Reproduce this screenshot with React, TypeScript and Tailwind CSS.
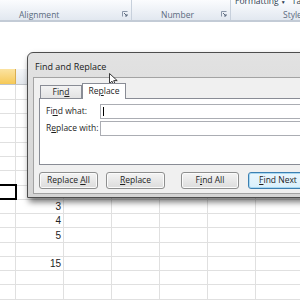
import React from "react"

const rowHeights = [
  "h-[15px]", "h-[14px]", "h-[14px]", "h-[15px]", "h-[14px]", "h-[14px]", "h-[15px]", "h-[14px]",
  "h-[14px]", "h-[14px]", "h-[15px]", "h-[14px]", "h-[14px]", "h-[14px]", "h-[15px]",
]
const values: Record<number, string> = { 8: "3", 9: "4", 10: "5", 12: "15" }
const cols = [0, 1, 2, 3, 4, 5, 6]

function Launcher() {
  return (
    <svg width="6" height="6" viewBox="0 0 6 6" className="mb-[2px]">
      <path d="M0.5 5.5V0.5H5.5" fill="none" stroke="#8a96a8" strokeWidth="1" />
      <path d="M2 2L5 5M5 3V5H3" fill="none" stroke="#5d6b7f" strokeWidth="1" />
    </svg>
  )
}

function Btn({ label, under, w, focus }: { label: string; under: number; w: string; focus?: boolean }) {
  return (
    <div
      className={`${w} h-[17px] shrink-0 rounded-[3px] border flex items-center justify-center text-[8.5px] text-[#1e1e1e] ${
        focus
          ? "border-[#3c7fb1] bg-gradient-to-b from-[#eaf6fd] to-[#d9f0fc] shadow-[inset_0_0_0_1px_#a8d8f2]"
          : "border-[#8e8f8f] bg-gradient-to-b from-[#f4f4f4] to-[#dcdcdc] shadow-[inset_0_0_0_1px_#fbfbfb]"
      }`}
    >
      <span className="whitespace-pre">
        {label.slice(0, under)}
        <span className="underline">{label[under]}</span>
        {label.slice(under + 1)}
      </span>
    </div>
  )
}

export default function App() {
  return (
    <div className="relative w-[300px] h-[300px] overflow-hidden bg-white font-['Open_Sans',sans-serif]">
      {/* ribbon */}
      <div className="h-[22px] flex bg-gradient-to-b from-[#fbfcfe] to-[#e2e8f0] border-b-2 border-[#c3cbd6] text-[8.5px] leading-none text-[#5b6b80]">
        <div className="w-[132px] shrink-0 flex items-end justify-between pl-[19px] pr-[3px] pb-[1px] border-r border-[#c7d0dc]">
          <span>Alignment</span>
          <Launcher />
        </div>
        <div className="w-[99px] shrink-0 flex items-end justify-between pl-[29px] pr-[3px] pb-[1px] border-r border-[#c7d0dc]">
          <span>Number</span>
          <Launcher />
        </div>
        <div className="flex-1 relative">
          <div className="absolute left-[4px] -top-[3px] text-[#2c3b4f] whitespace-nowrap">
            Formatting <span className="text-[5px]">▼</span>
            <span className="ml-[6px]">Tab</span>
          </div>
          <div className="absolute left-[52px] bottom-[1px]">Styles</div>
        </div>
      </div>

      <div className="h-[47px]" />

      {/* sheet */}
      <div className="relative font-['Liberation_Sans',sans-serif]">
        <div className="h-[16px] flex border-b border-[#c0c4c9]">
          <div className="w-[16px] shrink-0 bg-gradient-to-b from-[#fbe3a0] to-[#f6c955] border-r border-[#d9ae52]" />
          {cols.slice(1).map((c) => (
            <div key={c} className="w-[48px] shrink-0 bg-gradient-to-b from-[#f4f6f9] to-[#e3e7ec] border-r border-[#c8ccd2]" />
          ))}
        </div>
        {rowHeights.map((h, r) => (
          <div key={r} className={`${h} flex border-b border-[#e0e0e0]`}>
            <div className="w-[16px] shrink-0 border-r border-[#e0e0e0]" />
            {cols.slice(1).map((c) => (
              <div
                key={c}
                className="w-[48px] shrink-0 border-r border-[#e0e0e0] flex items-center justify-end pr-[2px] text-[10px] text-[#222]"
              >
                {c === 1 ? values[r] : null}
              </div>
            ))}
          </div>
        ))}
        <div className="absolute left-[-2px] top-[115px] w-[19px] h-[16px] border-2 border-black" />
      </div>

      {/* dialog */}
      <div className="absolute left-[27px] top-[52px] w-[290px] h-[146px] rounded-tl-[6px] border border-[#4d4d4d] bg-gradient-to-b from-[#e2e2e2] to-[#d4d4d4] shadow-[2px_4px_6px_rgba(0,0,0,0.55)] text-[#1e1e1e]">
        <div className="h-[24px] flex items-center pl-[7px] pt-[4px] text-[9px] text-[#1a1a1a]">Find and Replace</div>
        <div className="ml-[5px] h-[117px] border border-[#a3a3a3] bg-[#f0f0f0] pl-[5px] pt-[4px]">
          <div className="h-[16px] flex items-end text-[8.5px]">
            <div className="ml-[1px] w-[42px] h-[13px] border border-b-0 border-[#898c95] bg-gradient-to-b from-[#f3f3f3] to-[#e3e3e3] flex items-center justify-center">
              <span>
                Fin<span className="underline">d</span>
              </span>
            </div>
            <div className="w-[44px] h-[16px] border border-b-0 border-[#898c95] bg-white -mb-px relative z-10 flex items-center justify-center">
              <span>
                Re<span className="underline">p</span>lace
              </span>
            </div>
          </div>
          <div className="h-[67px] border border-[#898c95] bg-white pt-[5px] text-[8.5px]">
            <div className="flex items-center">
              <div className="w-[60px] shrink-0 pl-[6px] whitespace-nowrap">
                Fi<span className="underline">n</span>d what:
              </div>
              <div className="flex-1 h-[15px] border border-[#abadb3] relative">
                <div className="absolute left-[2px] top-[2px] w-px h-[9px] bg-black" />
              </div>
            </div>
            <div className="flex items-center mt-[2px]">
              <div className="w-[60px] shrink-0 pl-[6px] whitespace-nowrap">
                R<span className="underline">e</span>place with:
              </div>
              <div className="flex-1 h-[15px] border border-[#abadb3]" />
            </div>
          </div>
          <div className="flex mt-[7px]">
            <Btn label="Replace All" under={8} w="w-[59px]" />
            <div className="w-[8px] shrink-0" />
            <Btn label="Replace" under={0} w="w-[59px]" />
            <div className="w-[16px] shrink-0" />
            <Btn label="Find All" under={1} w="w-[58px]" />
            <div className="w-[9px] shrink-0" />
            <Btn label="Find Next" under={0} w="w-[60px]" focus />
          </div>
        </div>
      </div>

      {/* mouse pointer */}
      <svg className="absolute left-[109px] top-[73px]" width="9" height="13" viewBox="0 0 9 13">
        <path d="M0.5 0.5V10.5L3 8.2L4.8 12.2L6.4 11.5L4.7 7.6H8.2Z" fill="white" stroke="#222" strokeWidth="0.9" strokeLinejoin="round" />
      </svg>
    </div>
  )
}
